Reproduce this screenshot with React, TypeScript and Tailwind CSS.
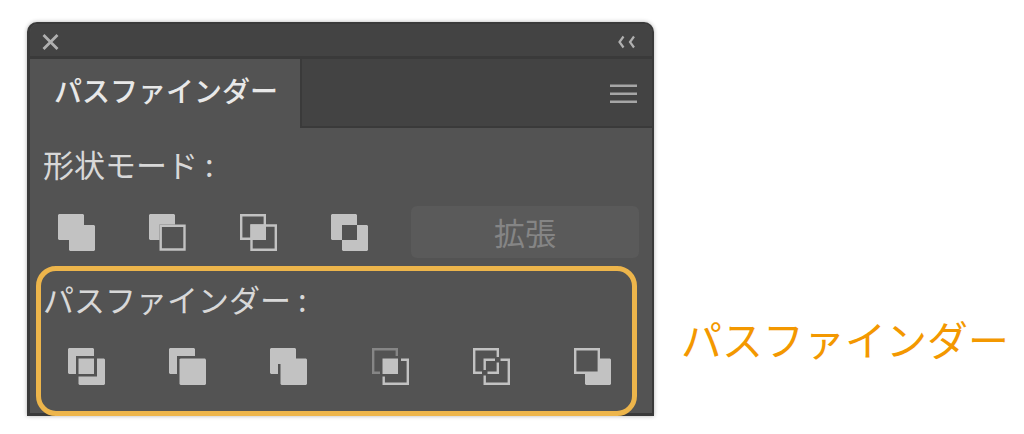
import React from 'react';

interface ToolIconProps {
  label: string;
  children: React.ReactNode;
}

const ToolIcon: React.FC<ToolIconProps> = ({ label, children }) => (
  <button type="button" aria-label={label} className="shrink-0 text-[#c2c2c2] hover:text-white">
    <svg viewBox="0 0 37 37" className="block h-[37px] w-[37px]" fill="currentColor" strokeWidth="2.4">
      {children}
    </svg>
  </button>
);

const shapeModes = [
  { name: '合体', icon: <path d="M1 0h24l1 1v10h10l1 1v24l-1 1H12l-1-1V26H1l-1-1V1z" /> },
  {
    name: '前面オブジェクトで型抜き',
    icon: (
      <>
        <path d="M1 0h24l1 1v9.500H10.500V26H1l-1-1V1z" />
        <path d="M11.700 11.700h23.800v23.800H11.700z" fill="none" stroke="currentColor" />
      </>
    ),
  },
  {
    name: '交差',
    icon: (
      <>
        <path d="M1.2 1.2h23.6v23.6H1.2zM11.5 11.5h24.3v24.3H11.5z" fill="none" stroke="currentColor" />
        <path d="M10.5 10.5H26V26H10.5z" />
      </>
    ),
  },
  {
    name: '中マド',
    icon: <path d="M1 0h24l1 1v10h10l1 1v24l-1 1H12l-1-1V26H1l-1-1V1zM11 11v15h15V11z" fillRule="evenodd" />,
  },
];

const pathfinders = [
  {
    name: '分割',
    icon: (
      <>
        <path d="M1 0h24l1 1v7H8v18H1l-1-1V1z" />
        <path d="M10.5 10.5H26V26H10.5z" />
        <path d="M29 10.5h7l1 1V36l-1 1H11.5l-1-1v-7.5H29z" />
      </>
    ),
  },
  {
    name: '刈り込み',
    icon: (
      <>
        <path d="M1 0h24l1 1v7H8v18H1l-1-1V1z" />
        <path d="M11.5 10.5H36l1 1V36l-1 1H11.5l-1-1V11.5z" />
      </>
    ),
  },
  {
    name: '合流',
    icon: <path d="M1 0h24l1 1v9.5h10l1 1V36l-1 1H11.5l-1-1V16H8v10H1l-1-1V1z" />,
  },
  {
    name: '切り抜き',
    icon: (
      <>
        <path d="M8 24.8H1.2V1.2h23.6V8" fill="none" stroke="#868686" />
        <path d="M10.5 10.5H26V26H10.5z" />
        <path d="M29 11.7h6.8v24.1H11.7V28.5" fill="none" stroke="currentColor" />
      </>
    ),
  },
  {
    name: 'アウトライン',
    icon: (
      <path
        d="M9 24.8H1.2V1.2h23.6V9M11.7 22V11.7H22M14.5 24.8h10.3V14.5M27.5 11.7h8.3v24.1H11.7V27.5"
        fill="none"
        stroke="currentColor"
      />
    ),
  },
  {
    name: '背面オブジェクトで型抜き',
    icon: (
      <>
        <path d="M1.2 1.2h23.6v23.6H1.2z" fill="none" stroke="currentColor" />
        <path d="M26 10.5h10l1 1V36l-1 1H12l-1-1V26h15z" />
      </>
    ),
  },
];

const PanelHeader: React.FC = () => (
  <header>
    <div className="flex h-[35px] items-center justify-between rounded-t-lg border-b-[3px] border-[#3a3a3a] bg-[#434343] pt-1 pr-4 pl-3 text-[#b0b0b0]">
      <button type="button" aria-label="閉じる">
        <svg viewBox="0 0 18 18" className="block h-[18px] w-[18px]" stroke="currentColor" strokeWidth="2.8">
          <path d="M1.5 2l14 14M15.5 2l-14 14" />
        </svg>
      </button>
      <button type="button" aria-label="折りたたむ">
        <svg viewBox="0 0 18 14" className="block h-3.5 w-[18px]" fill="none" stroke="currentColor" strokeWidth="2.2">
          <path d="M5.5 1.5L1.5 7l4 5.500M16 1.500L12 7l4 5.500" />
        </svg>
      </button>
    </div>
    <div className="flex h-[69px]">
      <h1 className="flex w-[270px] shrink-0 items-center pb-2 pl-6 text-[28px] leading-10 font-medium whitespace-nowrap text-[#e8e8e8]">
        パスファインダー
      </h1>
      <div className="flex flex-1 items-center justify-end border-b-2 border-l-2 border-[#3a3a3a] bg-[#434343] pt-0.5 pr-[15px]">
        <button type="button" aria-label="メニュー" className="text-[#a6a6a6]">
          <svg viewBox="0 0 27 20" className="block h-5 w-[27px]" fill="currentColor">
            <path d="M0 0.500h27v2.500H0zM0 8.500h27v2.500H0zM0 16.500h27v2.500H0z" />
          </svg>
        </button>
      </div>
    </div>
  </header>
);

export default function App() {
  return (
    <main className="flex items-start gap-[27px] bg-white pt-[22px] pr-[15px] pb-[18px] pl-[27px] font-['Noto_Sans_CJK_JP',sans-serif]">
      <section className="min-w-0 flex-1 rounded-t-[10px] border-2 border-b-[3px] border-l-[3px] border-[#3a3a3a] bg-[#535353] shadow-[0_0_4px_rgba(0,0,0,0.3)]">
        <PanelHeader />
        <h2 className="mt-4 pl-[13px] text-[31px] leading-10 text-[#d8d8d8]">形状モード :</h2>
        <div className="mt-[22px] flex h-13 items-center pr-[13px] pl-7">
          <div className="flex gap-[54px]">
            {shapeModes.map((mode) => (
              <ToolIcon key={mode.name} label={mode.name}>
                {mode.icon}
              </ToolIcon>
            ))}
          </div>
          <button
            type="button"
            disabled
            className="ml-[43px] h-full flex-1 rounded-md bg-[#5a5a5a] text-[31px] leading-10 text-[#858585]"
          >
            拡張
          </button>
        </div>

        <div className="mt-2 mr-[15px] -mb-[3px] ml-1.5 rounded-[20px] border-5 border-[#edb54b] pt-2 pb-[26px]">
          <h2 className="pl-0.5 text-[31px] leading-10 text-[#d8d8d8]">パスファインダー :</h2>
          <div className="mt-[29px] flex justify-between pr-[21px] pl-[27px]">
            {pathfinders.map((item) => (
              <ToolIcon key={item.name} label={item.name}>
                {item.icon}
              </ToolIcon>
            ))}
          </div>
        </div>
      </section>
      <p className="mt-[288px] shrink-0 text-[41px] leading-[56px] text-[#f39800]">パスファインダー</p>
    </main>
  );
}
